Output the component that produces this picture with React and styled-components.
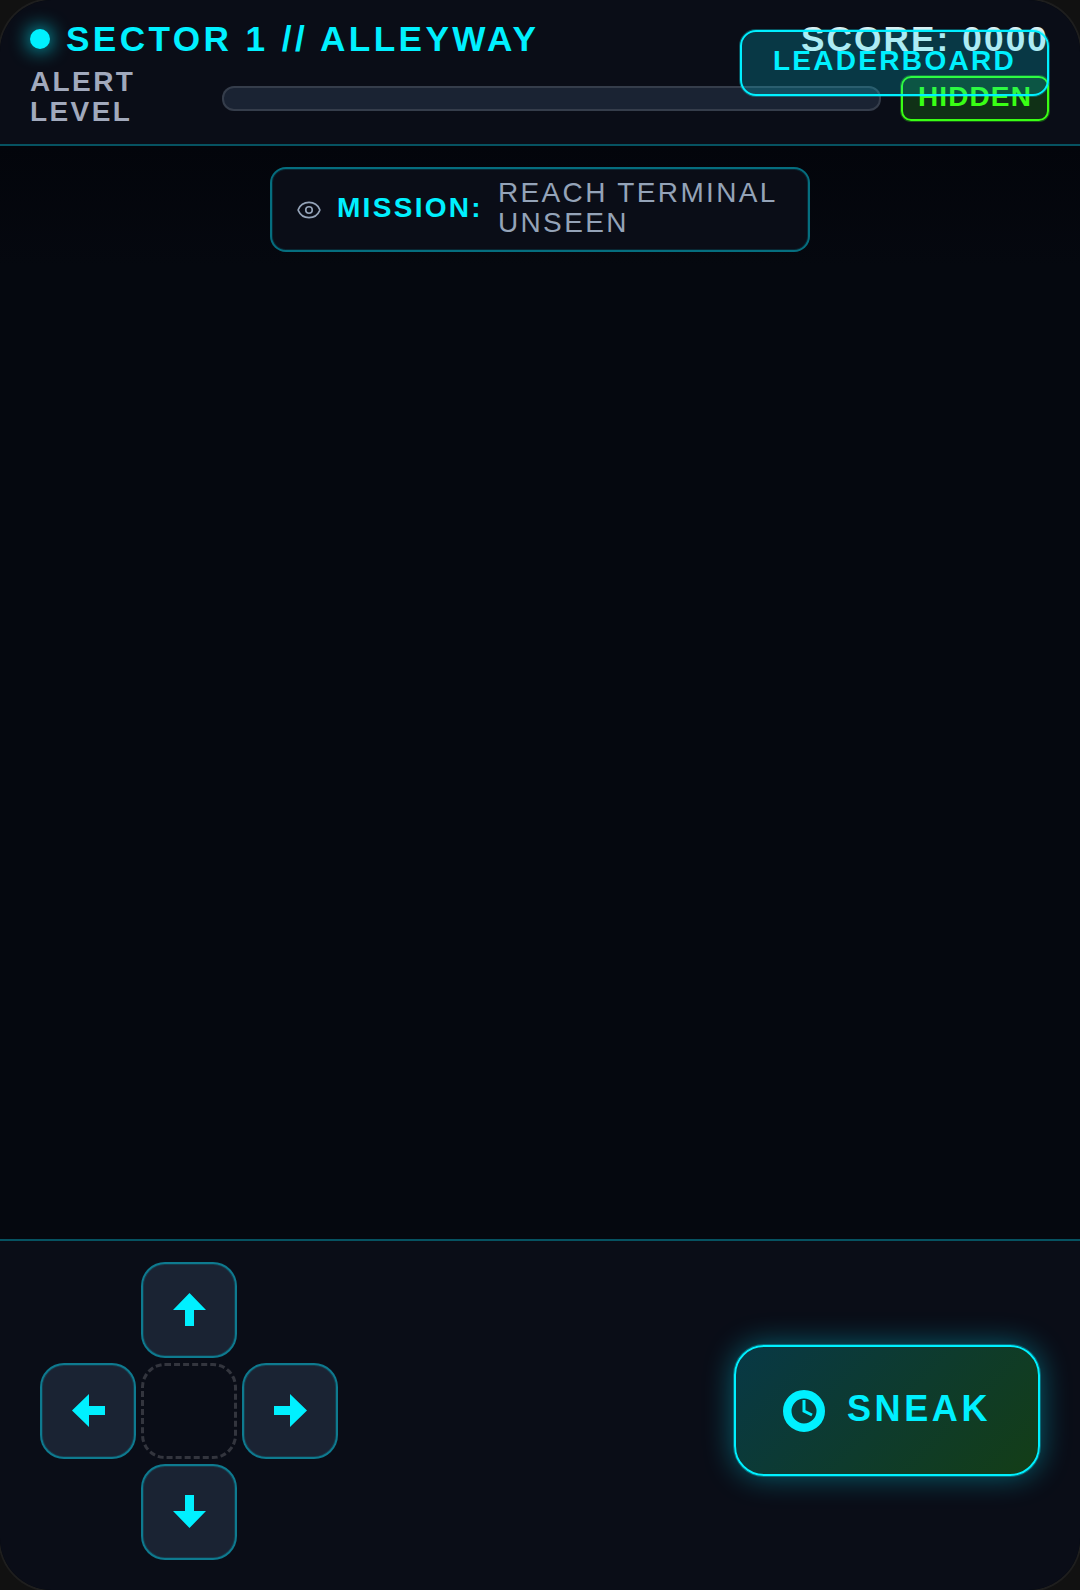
import styled, { createGlobalStyle } from "styled-components";
import { Eye } from "lucide-react";

const cyan = "#00f0ff";
const teal = "rgba(0, 229, 255, 0.45)";
const tealSoft = "inset 0 0 0 1px rgba(0, 229, 255, 0.12)";

const GlobalStyle = createGlobalStyle`
    html, body {
        margin: 0;
        padding: 0;
        background: #111111;
    }
    * {
        box-sizing: border-box;
    }
`

const Frame = styled.div`
    position: relative;
    width: 1080px;
    height: 1590px;
    display: flex;
    flex-direction: column;
    overflow: hidden;
    border-radius: 52px;
    background: #05080f;
    box-shadow: 0 0 0 2px #1e1e1e;
    font-family: "Liberation Sans", Arial, sans-serif;
`

const Header = styled.header`
    position: relative;
    height: 146px;
    padding: 20px 31px 0 30px;
    display: flex;
    flex-direction: column;
    gap: 12px;
    background: #0a0d17;
    border-bottom: 2px solid rgba(0, 229, 255, 0.32);
`

const TitleRow = styled.div`
    display: flex;
    align-items: center;
    justify-content: space-between;
`

const TitleGroup = styled.div`
    display: flex;
    align-items: center;
    gap: 16px;
`

const Dot = styled.span`
    width: 20px;
    height: 20px;
    border-radius: 50%;
    background: ${cyan};
    box-shadow: 0 0 20px ${cyan};
`

const Title = styled.h1`
    margin: 0;
    font-size: 35.2px;
    line-height: 38px;
    font-weight: 700;
    letter-spacing: 3.4px;
    color: ${cyan};
`

const Score = styled.span`
    font-size: 35.2px;
    line-height: 38px;
    font-weight: 700;
    letter-spacing: 2.1px;
    color: #d8eef2;
`

const LeaderboardButton = styled.button`
    position: absolute;
    top: 30px;
    right: 31px;
    width: 309px;
    height: 66px;
    padding: 0 0 4px;
    border: 2px solid ${cyan};
    border-radius: 16px;
    background: rgba(0, 229, 255, 0.2);
    box-shadow: 0 0 0 1px rgba(0, 240, 255, 0.3);
    font: 700 28px "Liberation Sans", Arial, sans-serif;
    letter-spacing: 2.3px;
    color: ${cyan};
`

const AlertRow = styled.div`
    display: flex;
    align-items: center;
    gap: 20px;
`

const AlertLabel = styled.span`
    width: 172px;
    margin-top: -3px;
    font-size: 28px;
    line-height: 30px;
    font-weight: 700;
    letter-spacing: 2.4px;
    color: #a1a9bc;
`

const AlertBar = styled.div`
    flex: 1;
    height: 25px;
    border: 2px solid rgba(255, 255, 255, 0.12);
    border-radius: 12px;
    background: #1a2333;
`

const StatusBadge = styled.span`
    width: 148px;
    height: 45px;
    padding-bottom: 4px;
    display: flex;
    align-items: center;
    justify-content: center;
    border: 2px solid #39ff14;
    border-radius: 10px;
    background: rgba(57, 255, 20, 0.15);
    box-shadow: 0 0 0 1px rgba(57, 255, 20, 0.3);
    font-size: 28px;
    font-weight: 700;
    letter-spacing: 1.1px;
    color: #39ff14;
`

const Stage = styled.main`
    flex: 1;
    display: flex;
    flex-direction: column;
    align-items: center;
    padding-top: 21px;
    background: linear-gradient(#03050b, #05080f 120px);
`

const MissionBox = styled.div`
    width: 540px;
    height: 85px;
    padding: 0 20px 3px 24px;
    display: flex;
    align-items: center;
    gap: 15px;
    border: 2px solid ${teal};
    border-radius: 16px;
    background: #0a0d17;
    box-shadow: ${tealSoft};
    color: #94a3b8;
`

const MissionEye = styled(Eye)`
    margin-top: 3px;
`

const MissionLabel = styled.span`
    font-size: 28px;
    font-weight: 700;
    letter-spacing: 2.3px;
    color: ${cyan};
`

const MissionText = styled.span`
    flex: 1;
    font-size: 28px;
    line-height: 30px;
    letter-spacing: 2.35px;
`

const Controls = styled.footer`
    height: 351px;
    padding: 21px 40px 0 40px;
    display: flex;
    align-items: flex-start;
    justify-content: space-between;
    background: #0a0d17;
    border-top: 2px solid rgba(0, 229, 255, 0.32);
`

const DPad = styled.div`
    display: grid;
    grid-template-columns: repeat(3, 96px);
    grid-template-rows: repeat(3, 96px);
    gap: 5px;
`

const PadButton = styled.button`
    grid-column: ${(props) => props.$col};
    grid-row: ${(props) => props.$row};
    padding: 0 0 2px;
    display: flex;
    align-items: center;
    justify-content: center;
    border: 2px solid ${teal};
    border-radius: 24px;
    background: #1a2333;
    box-shadow: ${tealSoft};
`

const PadCenter = styled.div`
    grid-column: 2;
    grid-row: 2;
    border: 3px dashed rgba(255, 255, 255, 0.17);
    border-radius: 24px;
`

const Arrow = styled.svg`
    width: 33px;
    height: 33px;
    fill: ${cyan};
    transform: rotate(${(props) => props.$turn}deg);
`

const SneakButton = styled.button`
    width: 306px;
    height: 131px;
    margin-top: 83px;
    display: flex;
    align-items: center;
    justify-content: center;
    gap: 22px;
    border: 2px solid ${cyan};
    border-radius: 30px;
    background: linear-gradient(135deg, rgba(0, 229, 255, 0.2), rgba(57, 255, 20, 0.2));
    box-shadow: 0 0 0 1px rgba(0, 240, 255, 0.3), 0 0 30px rgba(0, 229, 255, 0.4);
    font: 700 36px "Liberation Sans", Arial, sans-serif;
    letter-spacing: 3.6px;
    color: ${cyan};
`

const SneakLabel = styled.span`
    margin-bottom: 4px;
`

function PadArrow(props) {
    return (
        <Arrow $turn={props.turn} viewBox="0 0 33 33">
            <polygon points="16.5,0 33,17 21,17 21,33 12,33 12,17 0,17" />
        </Arrow>
    );
}

function ClockIcon() {
    return (
        <svg width="42" height="42" viewBox="0 0 42 42" fill="none" stroke={cyan}>
            <circle cx="21" cy="21" r="16.75" strokeWidth="8.5" />
            <path d="M21 10 V21 L29 25" strokeWidth="3" />
        </svg>
    );
}

export default function App() {
    return (
        <Frame>
            <GlobalStyle />
            <Header>
                <TitleRow>
                    <TitleGroup>
                        <Dot />
                        <Title>SECTOR 1 // ALLEYWAY</Title>
                    </TitleGroup>
                    <Score>SCORE: 0000</Score>
                </TitleRow>
                <AlertRow>
                    <AlertLabel>ALERT LEVEL</AlertLabel>
                    <AlertBar />
                    <StatusBadge>HIDDEN</StatusBadge>
                </AlertRow>
                <LeaderboardButton>LEADERBOARD</LeaderboardButton>
            </Header>
            <Stage>
                <MissionBox>
                    <MissionEye size={26} strokeWidth={1.5} />
                    <MissionLabel>MISSION:</MissionLabel>
                    <MissionText>REACH TERMINAL UNSEEN</MissionText>
                </MissionBox>
            </Stage>
            <Controls>
                <DPad>
                    <PadButton $col={2} $row={1}><PadArrow turn={0} /></PadButton>
                    <PadButton $col={1} $row={2}><PadArrow turn={-90} /></PadButton>
                    <PadCenter />
                    <PadButton $col={3} $row={2}><PadArrow turn={90} /></PadButton>
                    <PadButton $col={2} $row={3}><PadArrow turn={180} /></PadButton>
                </DPad>
                <SneakButton>
                    <ClockIcon />
                    <SneakLabel>SNEAK</SneakLabel>
                </SneakButton>
            </Controls>
        </Frame>
    );
}
